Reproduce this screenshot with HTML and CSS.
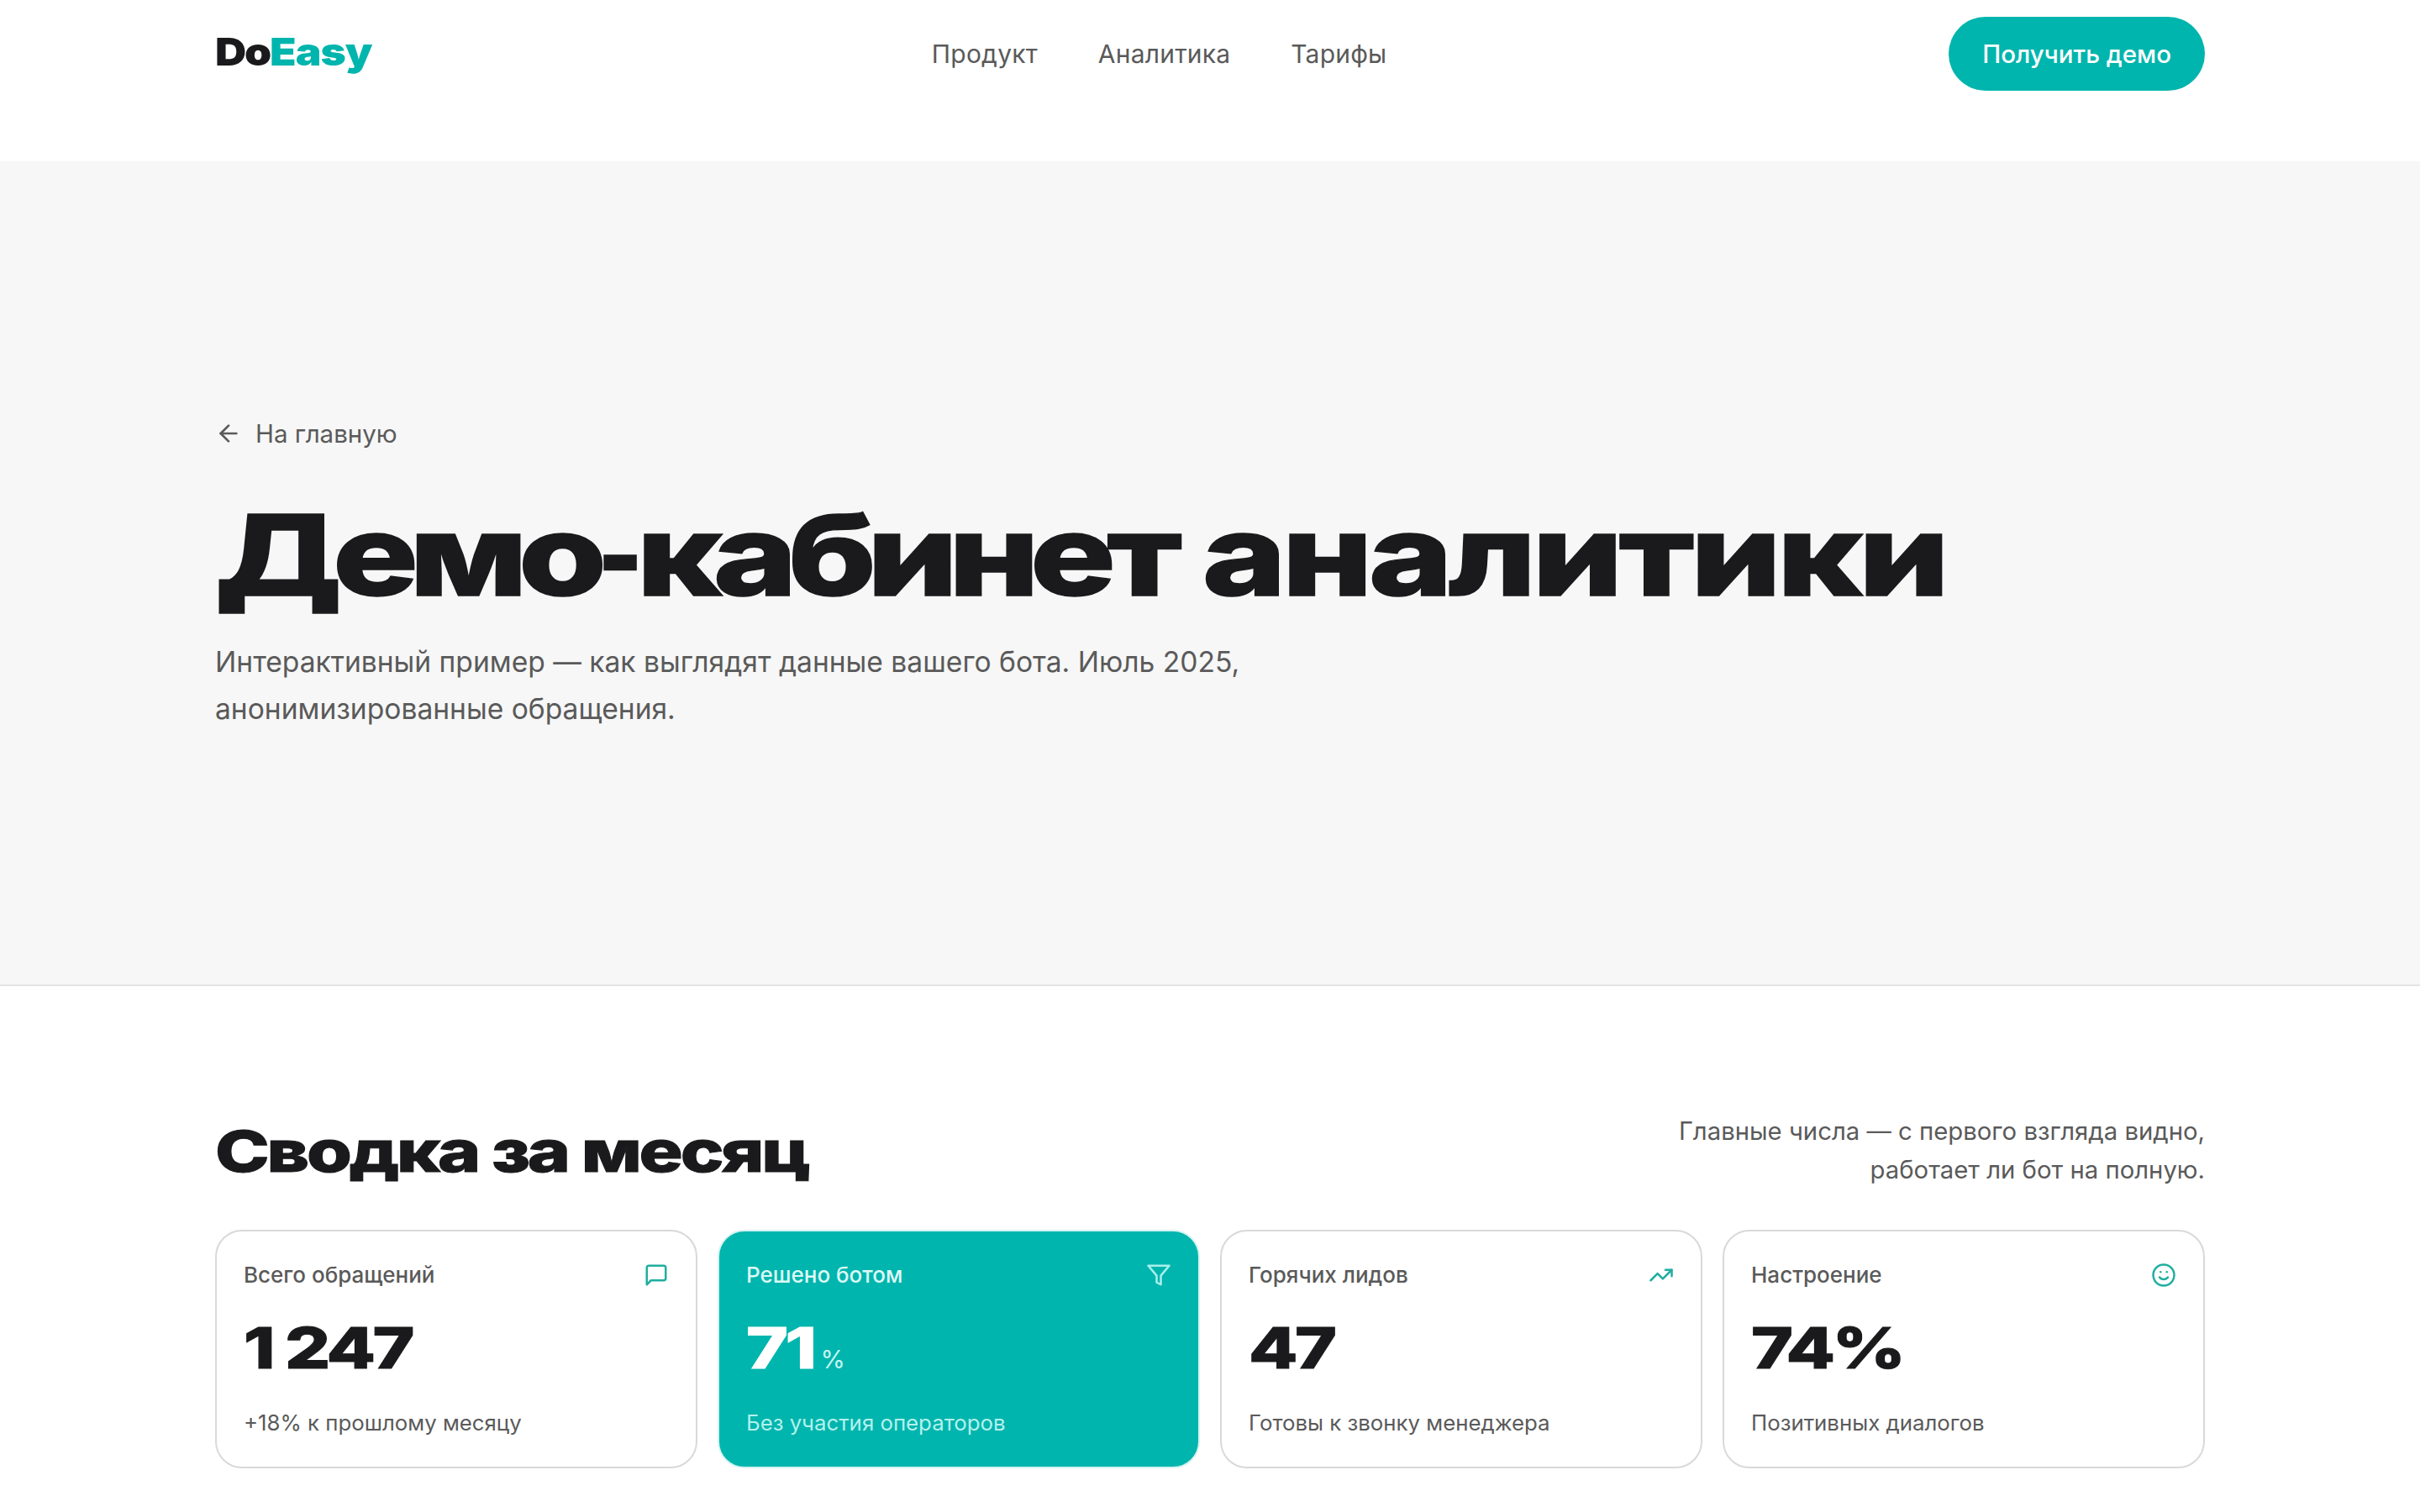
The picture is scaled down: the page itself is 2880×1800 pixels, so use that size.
FILE: index.html
```html
<!DOCTYPE html>
<html lang="ru">
<head>
  <meta charset="UTF-8">
  <title>DoEasy – Демо-кабинет аналитики</title>
  <link rel="stylesheet" href="styles.css">
</head>
<body>
  <header class="topbar">
    <a class="logo" href="#"><span class="logo-text">Do<em>Easy</em></span></a>
    <nav class="nav">
      <a href="#">Продукт</a>
      <a href="#">Аналитика</a>
      <a href="#">Тарифы</a>
    </nav>
    <a class="demo-btn" href="#">Получить демо</a>
  </header>

  <section class="hero">
    <a class="back" href="#">
      <svg viewBox="0 0 24 24"><path d="m12 19-7-7 7-7"/><path d="M19 12H5"/></svg>
      На главную
    </a>
    <h1><span class="wide"><span class="word-a">Демо<span class="dash">-</span>кабинет</span> аналитики</span></h1>
    <p>Интерактивный пример — как выглядят данные вашего бота. Июль 2025,<br>анонимизированные обращения.</p>
  </section>

  <section class="summary">
    <div class="summary-head">
      <h2><span class="wide">Сводка за месяц</span></h2>
      <p>Главные числа — с первого взгляда видно,<br>работает ли бот на полную.</p>
    </div>
    <div class="cards">
      <div class="card">
        <div class="card-top">
          <span>Всего обращений</span>
          <svg viewBox="0 0 24 24"><path d="M21 15a2 2 0 0 1-2 2H7l-4 4V5a2 2 0 0 1 2-2h14a2 2 0 0 1 2 2z"/></svg>
        </div>
        <div class="value"><span class="wide">1 247</span></div>
        <div class="note">+18% к прошлому месяцу</div>
      </div>
      <div class="card card-accent">
        <div class="card-top">
          <span>Решено ботом</span>
          <svg viewBox="0 0 24 24"><path d="M22 3H2l8 9.46V19l4 2v-8.54z"/></svg>
        </div>
        <div class="value"><span class="wide">71</span><small>%</small></div>
        <div class="note">Без участия операторов</div>
      </div>
      <div class="card">
        <div class="card-top">
          <span>Горячих лидов</span>
          <svg viewBox="0 0 24 24"><path d="m22 7-8.5 8.5-5-5L2 17"/><path d="M16 7h6v6"/></svg>
        </div>
        <div class="value"><span class="wide">47</span></div>
        <div class="note">Готовы к звонку менеджера</div>
      </div>
      <div class="card">
        <div class="card-top">
          <span>Настроение</span>
          <svg viewBox="0 0 24 24"><circle cx="12" cy="12" r="10"/><path d="M8 14s1.5 2 4 2 4-2 4-2"/><path d="M9 9h.01"/><path d="M15 9h.01"/></svg>
        </div>
        <div class="value"><span class="wide">74%</span></div>
        <div class="note">Позитивных диалогов</div>
      </div>
    </div>
  </section>
</body>
</html>
```

FILE: styles.css
```css
* { box-sizing: border-box; margin: 0; padding: 0; }
body {
  font: 30px/1.5 Inter, "Noto Sans", sans-serif;
  color: #1a1a1c;
  background: #fff;
  overflow: hidden;
}
a { color: inherit; text-decoration: none; }
svg {
  fill: none;
  stroke: currentColor;
  stroke-width: 2;
  stroke-linecap: round;
  stroke-linejoin: round;
}
/* headings are set in Inter stretched out, no wide face is installed */
.wide {
  display: inline-block;
  font-weight: 800;
  white-space: nowrap;
  transform-origin: left center;
  -webkit-text-stroke: 1px currentColor;
}

.topbar {
  display: flex;
  justify-content: space-between;
  align-items: center;
  height: 128px;
  margin-bottom: 64px;
  padding: 0 256px;
}
.logo { width: 186px; margin-bottom: 5px; }
.logo-text {
  display: inline-block;
  font-size: 46px;
  font-weight: 900;
  letter-spacing: -2px;
  transform: scaleX(1.12);
  transform-origin: left center;
}
.logo em { font-style: normal; color: #00b5ad; letter-spacing: -0.8px; }
.nav { display: flex; gap: 72px; color: #5a5a5a; letter-spacing: .2px; }
.demo-btn {
  margin-left: 2px;
  padding: 20px 40px;
  border-radius: 44px;
  background: #00b5ad;
  color: #fff;
  font-size: 29.5px;
  font-weight: 500;
  line-height: 48px;
}

.hero {
  height: 982px;
  padding: 296px 256px 0;
  background: #f7f7f7;
  border-bottom: 2px solid #e4e4e4;
}
.back {
  display: flex;
  align-items: center;
  gap: 16px;
  color: #5a5a5a;
  font-size: 29.5px;
  line-height: 56px;
}
.back svg { width: 32px; height: 32px; }
.hero h1 {
  margin-top: 30px;
  font-size: 134px;
  line-height: 172px;
}
.hero h1 .wide {
  transform: scaleX(1.268);
  letter-spacing: -3.9px;
  word-spacing: 2px;
  -webkit-text-stroke-width: 1.5px;
}
.word-a { letter-spacing: -8.6px; }
.dash {
  display: inline-block;
  margin: 0 -9px;
  transform: scaleX(.67);
}
.hero p {
  margin-top: 14px;
  font-size: 33.6px;
  line-height: 56px;
  color: #5a5a5a;
}

.summary { padding: 150px 256px 0; }
.summary-head {
  display: flex;
  justify-content: space-between;
  align-items: center;
  margin-bottom: 48px;
}
.summary-head h2 { font-size: 68px; line-height: 92px; }
.summary-head h2 .wide { transform: scaleX(1.28); letter-spacing: -2.5px; }
.summary-head p {
  text-align: right;
  font-size: 29.3px;
  line-height: 46px;
  color: #5a5a5a;
}

.cards {
  display: grid;
  grid-template-columns: repeat(4, 1fr);
  gap: 24px;
}
.card {
  height: 284px;
  padding: 34px 32px 0;
  border: 2px solid #d9d9d9;
  border-radius: 32px;
}
.card-top {
  display: flex;
  justify-content: space-between;
  align-items: center;
  font-size: 26px;
  font-weight: 500;
  line-height: 36px;
  color: #5a5a5a;
}
.card-top svg { width: 30px; height: 30px; color: #1fae9f; }
.value {
  display: flex;
  align-items: baseline;
  margin-top: 22px;
  font-size: 68px;
  line-height: 92px;
}
.value .wide { transform: scaleX(1.25); letter-spacing: -2.8px; }
.value small {
  margin-left: 24px;
  font-size: 30px;
  line-height: 1;
}
.note {
  margin-top: 26px;
  font-size: 25.8px;
  line-height: 36px;
  color: #5a5a5a;
}
.card-accent {
  background: #00b5ad;
  border-color: #d6f3f1;
  color: #fff;
}
.card-accent .card-top { color: #dcf9f7; }
.card-accent .card-top svg { color: #a8f0ec; }
.card-accent small { color: #c4f5f2; }
.card-accent .note { color: #b4f1ee; }
```
